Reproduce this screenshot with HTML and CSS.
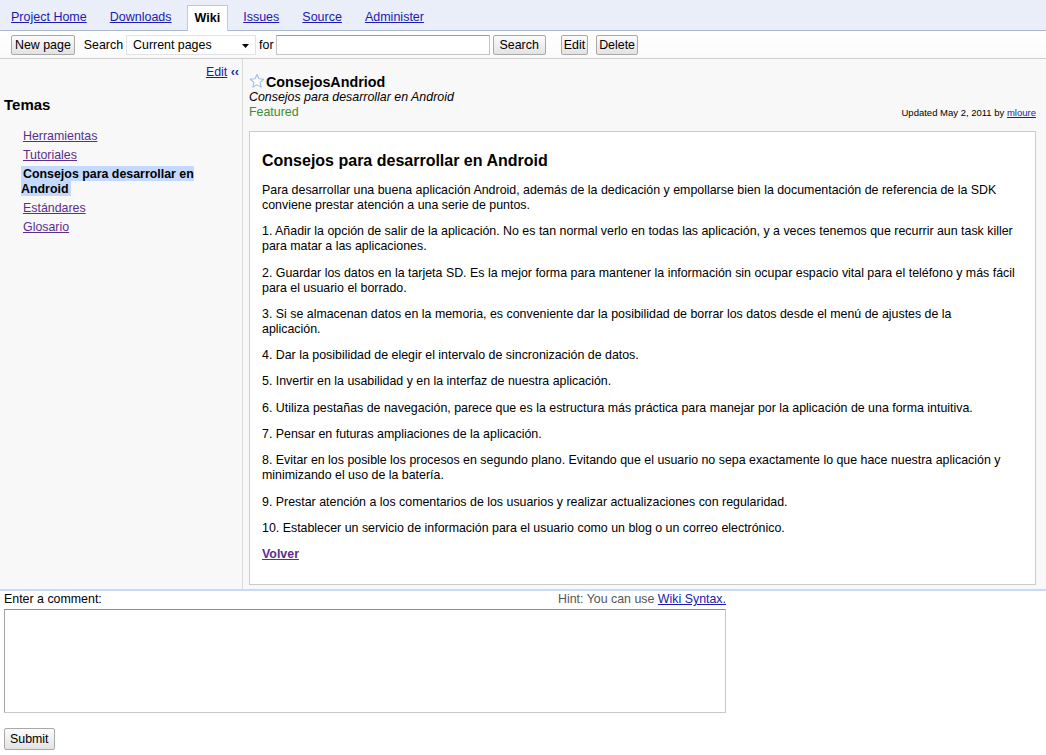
FILE: index.html
```html
<!DOCTYPE html>
<html lang="es">
<head>
<meta charset="utf-8">
<title>ConsejosAndriod</title>
<link rel="stylesheet" href="styles.css">
</head>
<body>
<nav class="tabs">
  <a class="tab" href="#">Project Home</a>
  <a class="tab" href="#">Downloads</a>
  <span class="tab active">Wiki</span>
  <a class="tab" href="#">Issues</a>
  <a class="tab" href="#">Source</a>
  <a class="tab" href="#">Administer</a>
</nav>
<div class="toolbar">
  <button class="btn">New page</button>
  <label class="tb-label search-label">Search</label>
  <span class="select-wrap">
    <select class="select"><option>Current pages</option></select>
    <svg class="caret" width="7" height="4" viewBox="0 0 7 4"><path d="M0 0h7L3.5 4z" fill="#000"/></svg>
  </span>
  <label class="tb-label for-label">for</label>
  <input class="query" type="text">
  <button class="btn btn-search">Search</button>
  <button class="btn btn-edit">Edit</button>
  <button class="btn btn-delete">Delete</button>
</div>
<div class="main">
  <aside class="sidebar">
    <div class="side-edit"><a href="#">Edit</a> <span class="collapse">&lsaquo;&lsaquo;</span></div>
    <h2 class="side-title">Temas</h2>
    <ul class="side-list">
      <li><a href="#">Herramientas</a></li>
      <li><a href="#">Tutoriales</a></li>
      <li><span class="current">Consejos para desarrollar en Android</span></li>
      <li><a href="#">Estándares</a></li>
      <li><a href="#">Glosario</a></li>
    </ul>
  </aside>
  <section class="content">
    <div class="page-title">
      <svg class="star" width="16" height="16" viewBox="0 0 24 24"><path d="M12 2.2l2.9 6.5 7.1.7-5.4 4.8 1.6 7-6.2-3.7-6.2 3.7 1.6-7-5.4-4.8 7.1-.7z" fill="#fff" stroke="#9dbfe6" stroke-width="1.6" stroke-linejoin="round"/></svg>
      <span>ConsejosAndriod</span>
    </div>
    <div class="summary">Consejos para desarrollar en Android</div>
    <div class="meta">
      <span class="featured">Featured</span>
      <span class="updated">Updated May 2, 2011 by <a href="#">mloure</a></span>
    </div>
    <article class="wiki-box">
      <h1 class="wiki-h">Consejos para desarrollar en Android</h1>
      <p>Para desarrollar una buena aplicación Android, además de la dedicación y empollarse bien la documentación de referencia de la SDK conviene prestar atención a una serie de puntos.</p>
      <p>1. Añadir la opción de salir de la aplicación. No es tan normal verlo en todas las aplicación, y a veces tenemos que recurrir aun task killer para matar a las aplicaciones.</p>
      <p>2. Guardar los datos en la tarjeta SD. Es la mejor forma para mantener la información sin ocupar espacio vital para el teléfono y más fácil para el usuario el borrado.</p>
      <p>3. Si se almacenan datos en la memoria, es conveniente dar la posibilidad de borrar los datos desde el menú de ajustes de la<br>aplicación.</p>
      <p>4. Dar la posibilidad de elegir el intervalo de sincronización de datos.</p>
      <p>5. Invertir en la usabilidad y en la interfaz de nuestra aplicación.</p>
      <p>6. Utiliza pestañas de navegación, parece que es la estructura más práctica para manejar por la aplicación de una forma intuitiva.</p>
      <p>7. Pensar en futuras ampliaciones de la aplicación.</p>
      <p>8. Evitar en los posible los procesos en segundo plano. Evitando que el usuario no sepa exactamente lo que hace nuestra aplicación y minimizando el uso de la batería.</p>
      <p>9. Prestar atención a los comentarios de los usuarios y realizar actualizaciones con regularidad.</p>
      <p>10. Establecer un servicio de información para el usuario como un blog o un correo electrónico.</p>
      <p><a class="back" href="#">Volver</a></p>
    </article>
  </section>
</div>
<form class="comment">
  <div class="comment-head">
    <label>Enter a comment:</label>
    <span class="hint">Hint: You can use <a href="#">Wiki Syntax.</a></span>
  </div>
  <textarea class="comment-text"></textarea>
  <button class="btn btn-submit" type="button">Submit</button>
</form>
</body>
</html>
```
FILE: styles.css
```css
* { box-sizing: border-box; }
body {
  margin: 0;
  font-family: "Liberation Sans", Arial, sans-serif;
  font-size: 12.4px;
  color: #000;
  background: #fff;
}
a { color: #1a1ab0; }

/* Tabs */
.tabs {
  display: flex;
  align-items: flex-end;
  gap: 7px;
  height: 31px;
  padding-left: 3px;
  background: #e9eef8;
  border-bottom: 1px solid #a9b6cc;
}
.tab {
  height: 25px;
  line-height: 24px;
  padding: 0 8px;
  font-size: 12.5px;
}
.tab.active {
  height: 26px;
  padding: 0 7px;
  margin-bottom: -1px;
  background: #fff;
  border: 1px solid #c3cad6;
  border-bottom: 0;
  font-weight: bold;
  color: #000;
}

/* Toolbar */
.toolbar {
  display: flex;
  align-items: center;
  height: 28px;
  padding-left: 11px;
  background: linear-gradient(#ffffff, #fafafa);
  border-bottom: 1px solid #cfcfcf;
}
.btn {
  height: 20px;
  padding: 0 3px;
  font: inherit;
  font-size: 12.4px;
  color: #000;
  background: linear-gradient(#fbfbfb, #e3e3e3);
  border: 1px solid #a9a9a9;
  border-radius: 2px;
}
.tb-label { line-height: 20px; }
.search-label { margin-left: 9px; }
.select-wrap {
  position: relative;
  margin-left: 3px;
}
.select {
  -webkit-appearance: none;
  appearance: none;
  width: 130px;
  height: 20px;
  padding: 0 0 0 6px;
  font: inherit;
  color: #000;
  background: #fff;
  border: 1px solid #e2e2e2;
  border-radius: 0;
  display: block;
}
.caret {
  position: absolute;
  right: 7px;
  top: 9px;
}
.for-label { margin-left: 3px; }
.query {
  width: 214px;
  height: 20px;
  margin-left: 2px;
  border: 1px solid #c4c4c4;
  border-top-color: #9a9a9a;
  background: #fff;
}
.btn-search { margin-left: 3px; padding: 0 6px; }
.btn-edit { margin-left: 15px; padding: 0 2px; }
.btn-delete { margin-left: 8px; padding: 0 2px; }

/* Main */
.main {
  display: flex;
  background: #f8f8f8;
  border-bottom: 2px solid #c9daf8;
}
.sidebar {
  width: 243px;
  flex: none;
  padding: 6px 3px 0 0;
  border-right: 1px solid #dcdcdc;
}
.side-edit {
  text-align: right;
  line-height: 15px;
}
.collapse {
  color: #1a1ab0;
  font-weight: bold;
}
.side-title {
  margin: 16px 0 0 4px;
  font-size: 15px;
  line-height: 18px;
}
.side-list {
  list-style: none;
  margin: 15px 0 0;
  padding: 0 10px 0 21px;
}
.side-list li {
  line-height: 15px;
  margin-bottom: 4px;
}
.side-list a {
  color: #5b2e8e;
  padding: 0 2px;
}
.current {
  font-weight: bold;
  background: #c3d9ff;
  padding: 1px 2px 0;
}

.content {
  flex: 1;
  min-width: 0;
  padding: 15px 10px 4px 6px;
}
.page-title {
  display: flex;
  align-items: center;
  gap: 1px;
  height: 16px;
  font-size: 14.3px;
  font-weight: bold;
}
.star { flex: none; margin-top: -2px; }
.summary {
  font-style: italic;
  line-height: 15px;
}
.meta {
  display: flex;
  justify-content: space-between;
  align-items: baseline;
  line-height: 15px;
}
.featured { color: #3b8f2e; }
.updated { font-size: 9.5px; color: #000; }

.wiki-box {
  margin-top: 11px;
  padding: 19px 18px 22px 12px;
  background: #fff;
  border: 1px solid #cccccc;
}
.wiki-h {
  margin: 0 0 13px;
  font-size: 16px;
  line-height: 19px;
}
.wiki-box p {
  margin: 0 0 11.3px;
  line-height: 15px;
  font-size: 12.4px;
}
.wiki-box p:last-child { margin-bottom: 0; }
.back {
  color: #5b2e8e;
  font-weight: bold;
}

/* Comment */
.comment {
  padding: 0 0 0 4px;
}
.comment-head {
  display: flex;
  justify-content: space-between;
  width: 722px;
  line-height: 16px;
}
.hint { color: #555; }
.comment-text {
  display: block;
  width: 722px;
  height: 104px;
  margin-top: 2px;
  border: 1px solid #c8c8c8;
  border-top-color: #8f8f8f;
  border-left-color: #a6a6a6;
  resize: none;
}
.btn-submit {
  margin-top: 15px;
  height: 22px;
  padding: 0 5px;
}
```
